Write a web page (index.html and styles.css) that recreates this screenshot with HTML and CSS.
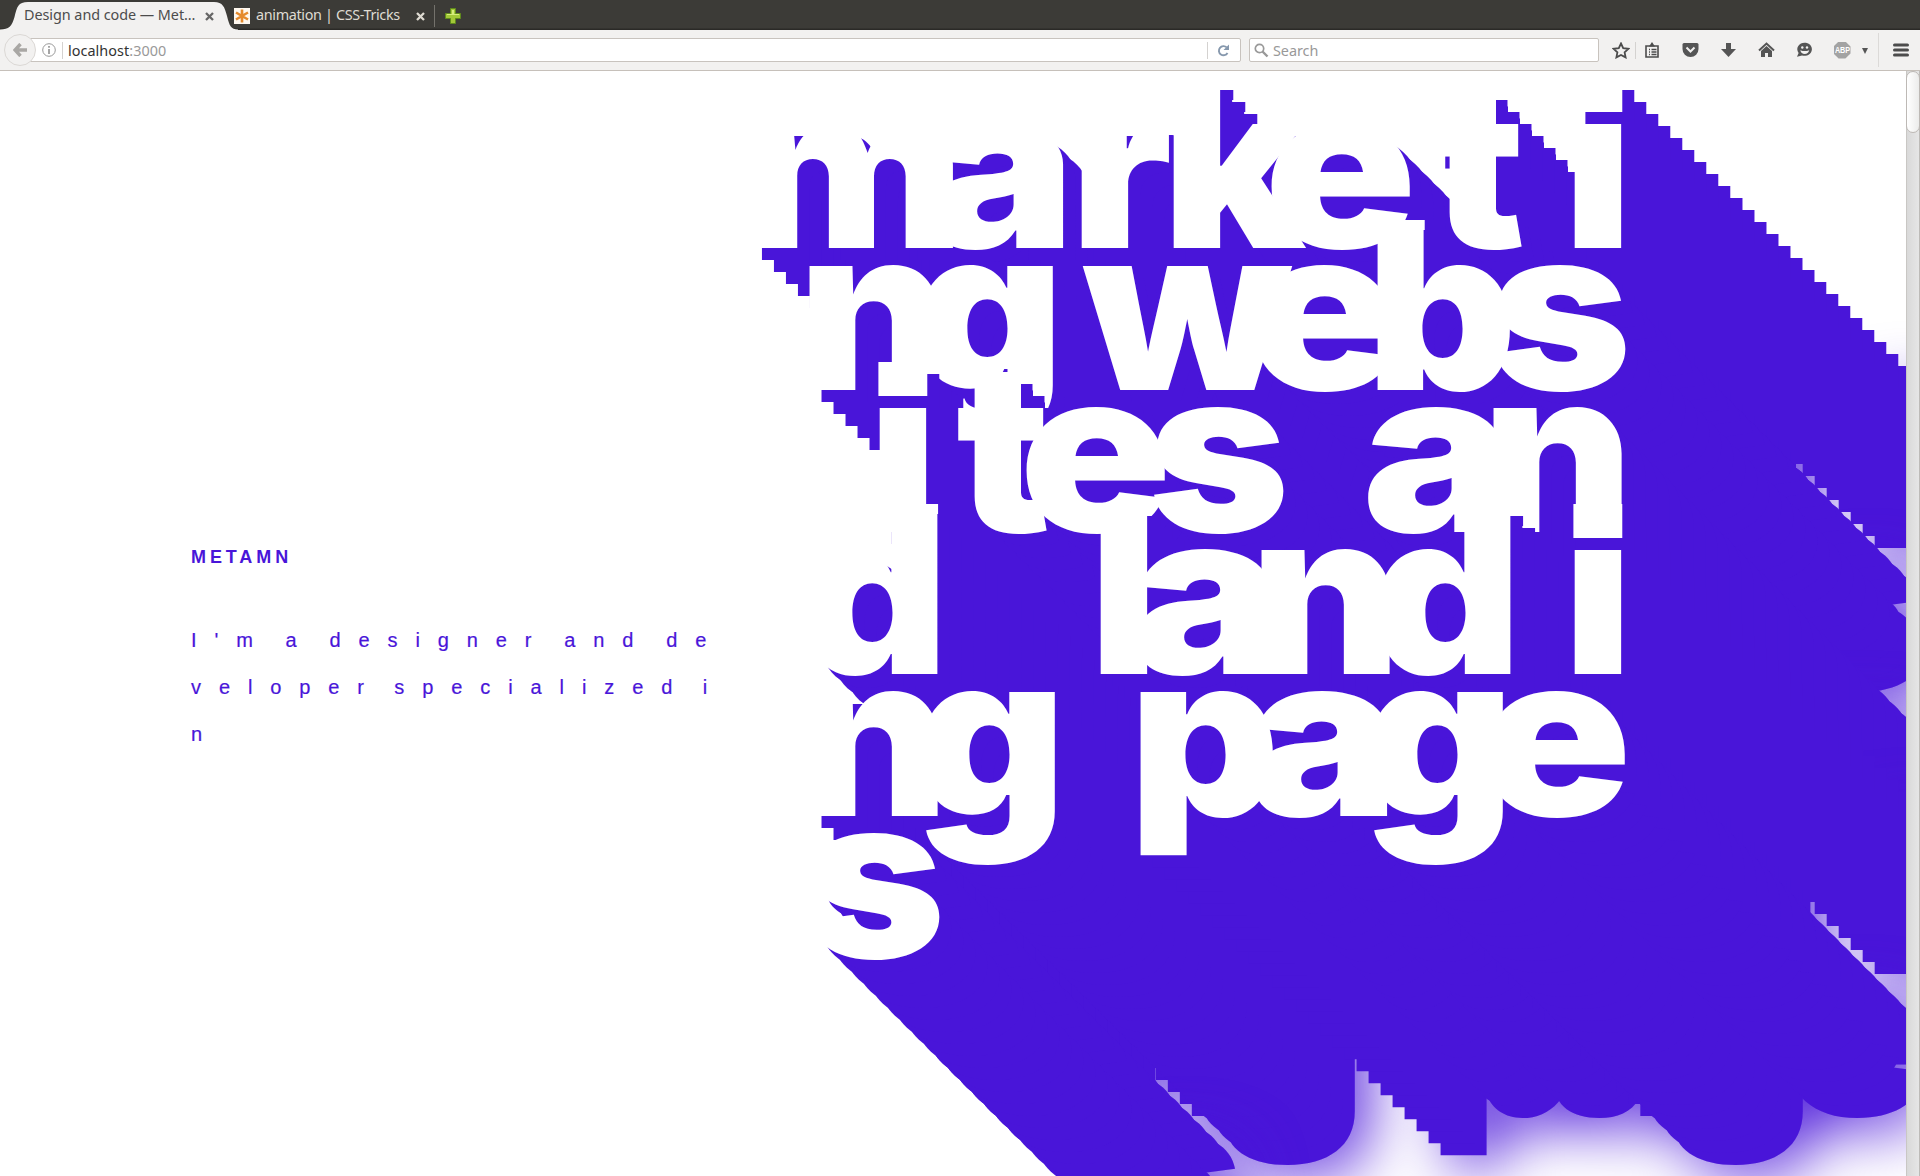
FILE: index.html
```html
<!DOCTYPE html>
<html lang="en">
<head>
<meta charset="utf-8">
<title>Design and code — Metamn</title>
<link rel="stylesheet" href="styles.css">
</head>
<body>
<header class="browser">
  <div class="tabs">
    <div class="tab tab-active">
      <svg class="tab-shape" width="238" height="30" viewBox="0 0 238 30"><path d="M0 30v-.5C9 29.5 12 26 14.500 17C17 7 18 2 28 2H214C223 2 224.500 7 227 16C229.500 26 231 29.500 238 29.500V30Z" fill="#f2f1f0"/></svg>
      <span class="tab-title">Design and code — Met…</span>
      <svg class="close" width="9" height="9" viewBox="0 0 9 9"><path d="M1 1L8 8M8 1L1 8" stroke="#666" stroke-width="2.300"/></svg>
    </div>
    <div class="tab tab-idle">
      <svg width="16" height="16" viewBox="0 0 16 16"><rect width="16" height="16" fill="#fff8ef"/><path d="M8 1.500V14.500M2 4.500L14 11.500M14 4.500L2 11.500" stroke="#e58a2c" stroke-width="2.600"/></svg>
      <span class="tab-title narrow">animation | CSS-Tricks</span>
      <svg class="close" width="9" height="9" viewBox="0 0 9 9"><path d="M1 1L8 8M8 1L1 8" stroke="#dfdbd2" stroke-width="2.300"/></svg>
    </div>
    <svg class="new-tab" width="16" height="16" viewBox="0 0 16 16"><path d="M5.500 .5h5v5h5v5h-5v5h-5v-5h-5v-5h5z" fill="#a3c838" stroke="#5f8a1c"/><path d="M7 2h2v4h5v1H2V6h5z" fill="#d5ec7c"/></svg>
  </div>
  <nav class="toolbar">
    <div class="back"><svg width="14" height="14" viewBox="0 0 14 14"><path d="M7.500 1L2 7L7.500 13M2.500 7H14" fill="none" stroke="#a9a7a4" stroke-width="3.400"/></svg></div>
    <div class="urlbar">
      <svg width="14" height="14" viewBox="0 0 14 14"><circle cx="7" cy="7" r="6.300" fill="none" stroke="#999"/><path d="M7 3v1.700M7 6v5" stroke="#888" stroke-width="1.500"/></svg>
      <i class="rule"></i>
      <span class="url">localhost<span class="port">:3000</span></span>
      <i class="rule"></i>
      <svg class="reload" width="13" height="13" viewBox="0 0 13 13"><path d="M10.500 9A4.600 4.600 0 1 1 9.700 3.400" fill="none" stroke="#8698ad" stroke-width="1.900"/><path d="M12 .5V6H6.500Z" fill="#8698ad"/></svg>
    </div>
    <div class="search">
      <svg width="15" height="15" viewBox="0 0 15 15"><circle cx="5.500" cy="5.500" r="4.200" fill="none" stroke="#999" stroke-width="1.700"/><path d="M8.500 8.500L13.500 13.500" stroke="#999" stroke-width="2.400"/></svg>
      <span>Search</span>
    </div>
    <div class="icons">
      <span class="slot star"><svg width="18" height="17" viewBox="0 0 18 17"><path d="M9 1.500L11.200 6.200L16.400 6.800L12.600 10.300L13.600 15.400L9 12.900L4.400 15.400L5.400 10.300L1.600 6.800L6.800 6.200Z" fill="none" stroke="#4c4c4c" stroke-width="1.800"/></svg></span>
      <i class="rule"></i>
      <span class="slot"><svg width="16" height="16" viewBox="0 0 16 16"><path d="M2 4h12v11H2zM5 7.500h1M7.500 7.500h5M5 10h1M7.500 10h5M5 12.500h1M7.500 12.500h5" fill="none" stroke="#4c4c4c" stroke-width="1.600"/><path d="M5 4.500L8 0L11 4.500z" fill="#4c4c4c"/></svg></span>
      <span class="slot"><svg width="17" height="16" viewBox="0 0 17 16"><path d="M2 1H15Q16.500 1 16.500 2.500V7A8 8 0 0 1 .5 7V2.500Q.5 1 2 1Z" fill="#555"/><path d="M4.500 5.500L8.500 9.500L12.500 5.500" fill="none" stroke="#f2f1f0" stroke-width="2"/></svg></span>
      <span class="slot"><svg width="15" height="16" viewBox="0 0 15 16"><path d="M5 1h5v6h5L7.500 15L0 7h5z" fill="#555"/></svg></span>
      <span class="slot"><svg width="17" height="16" viewBox="0 0 17 16"><path d="M1 8.500L8.500 1.500L16 8.500" fill="none" stroke="#555" stroke-width="2"/><path d="M3 9L8.500 4L14 9v6h-4v-4H7v4H3z" fill="#555"/></svg></span>
      <span class="slot"><svg width="17" height="16" viewBox="0 0 17 16"><path d="M1 14.800L2.600 11A7.300 6.600 0 1 1 6 13.400Z" fill="#555"/><circle cx="6.300" cy="5.500" r="1.200" fill="#f2f1f0"/><circle cx="11" cy="5.500" r="1.200" fill="#f2f1f0"/><path d="M4.300 8.200Q8.700 10 13.200 8.200Q12.200 12 8.700 12Q5.200 12 4.300 8.200Z" fill="#f2f1f0"/></svg></span>
      <span class="slot abp"><span class="badge"><span class="badge-text">ABP</span></span></span>
      <svg class="caret" width="6" height="6" viewBox="0 0 6 6"><path d="M0 0H6L3 6Z" fill="#555"/></svg>
      <i class="divider"></i>
      <span class="slot menu"><svg width="16" height="14" viewBox="0 0 16 14"><path d="M1.500 2H14.500M1.500 7H14.500M1.500 12H14.500" stroke="#4c4c4c" stroke-width="3" stroke-linecap="round"/></svg></span>
    </div>
  </nav>
</header>

<main class="viewport">
  <div class="page">
    <section class="intro">
      <h2 class="logo">METAMN</h2>
      <p class="lead"><span class="row row-1">I'm a designer and de</span><span class="row row-2">veloper specialized i</span><span class="row">n</span></p>
    </section>
    <h1 class="headline">
      <span class="line l1"><b class="m" style="width:186.5px">m</b><b class="a" style="width:146.1px">a</b><b class="r" style="width:92px">r</b><b class="k" style="width:101.6px">k</b><b class="e" style="width:167.7px">e</b><b class="t" style="width:131.8px">t</b><b class="i">i</b></span>
      <span class="line l2"><b class="n" style="width:115.1px">n</b><b class="g" style="width:170px">g </b><b class="w" style="width:163.3px">w</b><b class="e" style="width:119.5px">e</b><b class="b" style="width:124.3px">b</b><b class="s">s</b></span>
      <span class="line l3"><b class="i" style="width:88.2px">i</b><b class="t" style="width:62.3px">t</b><b class="e" style="width:129.3px">e</b><b class="s" style="width:214.5px">s </b><b class="a" style="width:119.5px">a</b><b class="n">n</b></span>
      <span class="line l4"><b class="d" style="width:291.1px">d </b><b class="l" style="width:42.3px">l</b><b class="a" style="width:118.8px">a</b><b class="n" style="width:121.1px">n</b><b class="d" style="width:191.8px">d</b><b class="i">i</b></span>
      <span class="line l5"><b class="n" style="width:116.6px">n</b><b class="g" style="width:213.8px">g </b><b class="p" style="width:119.3px">p</b><b class="a" style="width:114.9px">a</b><b class="g" style="width:116.3px">g</b><b class="e">e</b></span>
      <span class="line l6"><b class="s">s</b></span>
    </h1>
  </div>
  <div class="scrollbar"><div class="thumb"></div></div>
</main>

<svg class="defs" width="0" height="0">
  <!-- 25 solid copies, 12px apart, then one blurred copy behind them -->
  <filter id="extrude" filterUnits="userSpaceOnUse" x="-40" y="-60" width="1260" height="1160" color-interpolation-filters="sRGB">
    <feFlood flood-color="#4915d9"/>
    <feComposite in2="SourceAlpha" operator="in" result="ink"/>
    <feOffset in="ink" dx="12" dy="12" result="c1"/>
    <feOffset in="c1" dx="12" dy="12" result="o1"/>
    <feMerge result="c2"><feMergeNode in="o1"/><feMergeNode in="c1"/></feMerge>
    <feOffset in="c2" dx="24" dy="24" result="o2"/>
    <feMerge result="c4"><feMergeNode in="o2"/><feMergeNode in="c2"/></feMerge>
    <feOffset in="c4" dx="48" dy="48" result="o4"/>
    <feMerge result="c8"><feMergeNode in="o4"/><feMergeNode in="c4"/></feMerge>
    <feOffset in="c8" dx="96" dy="96" result="o8"/>
    <feMerge result="c16"><feMergeNode in="o8"/><feMergeNode in="c8"/></feMerge>
    <feOffset in="c16" dx="108" dy="108" result="o16"/>
    <feOffset in="ink" dx="312" dy="312" result="far"/>
    <feGaussianBlur in="far" stdDeviation="30" result="glow"/>
    <feMerge>
      <feMergeNode in="glow"/>
      <feMergeNode in="o16"/>
      <feMergeNode in="c16"/>
      <feMergeNode in="SourceGraphic"/>
    </feMerge>
  </filter>
</svg>
</body>
</html>
```
FILE: styles.css
```css
* { box-sizing: border-box; }

body {
  margin: 0;
  width: 1920px;
  height: 1176px;
  overflow: hidden;
  display: flex;
  flex-direction: column;
  background: #fff;
  font-family: "Noto Sans", "Open Sans", sans-serif;
}

svg { display: block; flex: none; }
.defs { position: absolute; }

/* Browser chrome */
.browser { flex: none; height: 71px; font-size: 14.4px; letter-spacing: -0.05px; white-space: nowrap; }
.tabs {
  height: 30px;
  display: flex;
  align-items: center;
  background: linear-gradient(#3c3b37 28px, #2b2a27 29px);
}
.tab { display: flex; align-items: center; height: 30px; padding-top: 2px; }
.tab-title { margin-top: -3px; }
.tab-active { position: relative; width: 234px; padding-left: 24px; color: #4c4c4c; }
.tab-shape { position: absolute; left: 0; top: 0; }
.tab-active .tab-title { position: relative; width: 181px; }
.tab-active .close { position: relative; }
.tab-idle { width: 200px; color: #dfdbd2; }
.tab-idle .tab-title { width: 160px; margin-left: 6px; }
.narrow { letter-spacing: -0.35px; }
.tabs::after { content: ""; order: 1; width: 1px; height: 22px; background: #74726c; margin-top: 2px; }
.new-tab { order: 2; margin-left: 10px; margin-top: 2px; }

.toolbar {
  height: 41px;
  display: flex;
  align-items: center;
  background: #f2f1f0;
  border-bottom: 1px solid #c6c0ba;
}
.back {
  position: relative;
  z-index: 1;
  flex: none;
  width: 32px;
  height: 32px;
  margin-left: 4px;
  border: 1px solid #dbd8d5;
  border-radius: 50%;
  background: #f2f1f0;
  display: flex;
  align-items: center;
  justify-content: center;
}
.urlbar, .search {
  height: 24px;
  display: flex;
  align-items: center;
  background: #fff;
  border: 1px solid #c8c3be;
  border-radius: 2px;
}
.urlbar { width: 1212px; margin-left: -7px; padding-left: 12px; flex: none; }
.rule { flex: none; width: 1px; height: 17px; background: #d4d2d0; }
.urlbar svg + .rule { margin-left: 6px; }
.url { flex: 1; padding-left: 5px; color: #333; letter-spacing: 0.05px; }
.port { color: #999; }
.reload { margin: 0 10px 0 9px; }
.search { flex: none; width: 350px; margin-left: 8px; padding-left: 4px; gap: 4px; color: #999; }
.icons { flex: none; display: flex; align-items: center; height: 40px; margin-left: 11px; }
.slot { width: 38px; display: flex; justify-content: center; }
.star { width: 22px; }
.icons .rule { margin-left: 3px; margin-right: -3px; }
.badge {
  width: 17px;
  height: 17px;
  background: #a3a3a3;
  color: #fff;
  font: 700 9px/17px "Liberation Sans", sans-serif;
  clip-path: polygon(30% 0, 70% 0, 100% 30%, 100% 70%, 70% 100%, 30% 100%, 0 70%, 0 30%);
  display: flex;
  justify-content: center;
}
.badge-text { transform: scaleX(0.8); letter-spacing: 0; }
.caret { margin: 2px 10px 0 1px; }
.divider { width: 1px; height: 34px; background: #dcdad8; }
.menu { width: 44px; }

/* Page */
.viewport { flex: 1; min-height: 0; display: flex; }
.page { width: 1906px; overflow: hidden; display: flex; color: #4915d9; }

.intro { flex: none; width: 737.5px; padding: 474px 0 0 191px; }
.logo {
  margin: 0;
  font: 700 18px/24px "Liberation Sans", sans-serif;
  letter-spacing: 3.9px;
}
.lead {
  margin: 48px 0 0;
  font: 20px/47.2px "Liberation Sans", sans-serif;
  letter-spacing: 17.9px;
  -webkit-text-stroke: 0.2px #4915d9;
}
.row { display: block; white-space: nowrap; }
.row-1 { word-spacing: -8.6px; }
.row-2 { word-spacing: -11px; }

.headline {
  margin: 0;
  padding-top: 24px;
  font: 900 227px/142px "Inter", sans-serif;
  color: #fff;
}
.line { display: flex; height: 142px; white-space: pre; filter: url(#extrude); }
.line b {
  position: relative;
  flex: none;
  font-weight: 900;
  transform: scaleX(1.03);
  transform-origin: 0 0;
}
.l2 { margin-left: 60.8px; }
.l3 { margin-left: 130.7px; }
.l4 { margin-left: 60.6px; }
.l5 { margin-left: 60.8px; }
.l6 { margin-left: 66px; }
.line .m { transform: scaleX(1.06); }
.line .w { transform: scaleX(1.05); }
.line .a { transform: scaleX(1.12); }
.line .e { transform: scaleX(1.11); }
.line .s { transform: scaleX(1.06); }
.line .n { transform: scaleX(1.025); }
.line .r, .line .k, .line .t, .line .i, .line .l { transform: scaleX(1.04); }

/* Squared tittles and slightly taller ascenders */
.i::before, .k::before, .b::before, .l::before, .d::before, .t::before {
  content: "";
  position: absolute;
  left: 10.3px;
  top: -17px;
  width: 46.3px;
  height: 10px;
  background: #fff;
}
.i::before { height: 34px; }
.d::before { left: 89.8px; }
.t::before { left: 17.4px; top: -7px; width: 44.3px; height: 14px; }
.line .i { clip-path: inset(-17px -100px -60px -20px); }
.line .p { clip-path: inset(-20px -100px -50.2px -20px); }

.scrollbar {
  flex: none;
  width: 14px;
  background: linear-gradient(90deg, #c9c7c4 1px, #d9d9d9 1px, #e6e6e6 13px, #bdbbb8 13px);
}
.thumb {
  height: 62px;
  border: 1px solid #bdb9b5;
  border-radius: 7px;
  background: linear-gradient(90deg, #fff, #ececeb);
}
```
